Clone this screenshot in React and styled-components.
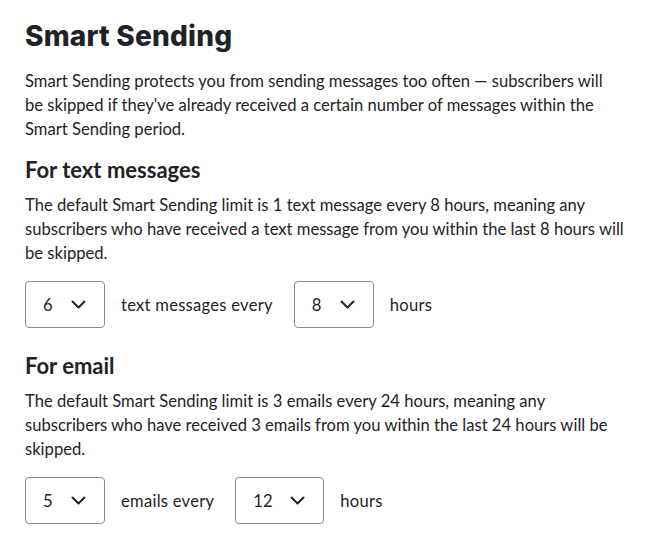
import React from 'react'
import styled, { createGlobalStyle } from 'styled-components'

const Global = createGlobalStyle`
  body {
    margin: 0;
    background: #fff;
    color: #1f2226;
    font-family: Lato, "Noto Sans", sans-serif;
  }
`

const Page = styled.div`
  padding: 18px 24px 20px 25px;
  width: 600px;
`

const Title = styled.h1`
  margin: 0 0 15px 0;
  font-family: Inter, "DejaVu Sans", sans-serif;
  font-weight: 800;
  font-size: 28px;
  line-height: 36px;
  letter-spacing: 0.2px;
`

const Heading = styled.h2`
  margin: ${p => (p.$afterRow ? 25 : 16)}px 0 10px 0;
  font-size: 22px;
  line-height: 26px;
  font-weight: 700;
`

const Para = styled.p`
  margin: 0;
  max-width: ${p => p.$max || 600}px;
  font-size: 16.6px;
  line-height: 24px;
`

const Row = styled.div`
  display: flex;
  align-items: center;
  margin-top: 16px;
  font-size: 16.6px;
`

const Select = styled.div`
  box-sizing: border-box;
  height: 47px;
  width: ${p => p.$w}px;
  border: 1px solid #8a8a8a;
  border-radius: 4px;
  display: flex;
  align-items: center;
  justify-content: space-between;
  padding: 0 18px 0 17px;
  margin-right: 16px;
`

const Label = styled.span`
  margin-right: 21px;
  letter-spacing: 0.25px;
`

const Chevron = () => (
  <svg width="15" height="9" viewBox="0 0 15 9" fill="none">
    <path d="M1.5 1.5 L7.5 7.5 L13.5 1.5" stroke="#1f2226" strokeWidth="2" strokeLinecap="round" strokeLinejoin="round" />
  </svg>
)

const Dropdown = ({ value, w }) => (
  <Select $w={w}>
    <span>{value}</span>
    <Chevron />
  </Select>
)

export default function App() {
  return (
    <Page>
      <Global />
      <Title>Smart Sending</Title>
      <Para $max={592}>
        Smart Sending protects you from sending messages too often — subscribers will be skipped if they've already received a certain number of messages within the Smart Sending period.
      </Para>
      <Heading>For text messages</Heading>
      <Para>
        The default Smart Sending limit is 1 text message every 8 hours, meaning any subscribers who have received a text message from you within the last 8 hours will be skipped.
      </Para>
      <Row>
        <Dropdown value="6" w={80} />
        <Label>text messages every</Label>
        <Dropdown value="8" w={80} />
        <Label>hours</Label>
      </Row>
      <Heading $afterRow>For email</Heading>
      <Para>
        The default Smart Sending limit is 3 emails every 24 hours, meaning any subscribers who have received 3 emails from you within the last 24 hours will be skipped.
      </Para>
      <Row>
        <Dropdown value="5" w={80} />
        <Label>emails every</Label>
        <Dropdown value="12" w={89} />
        <Label>hours</Label>
      </Row>
    </Page>
  )
}
